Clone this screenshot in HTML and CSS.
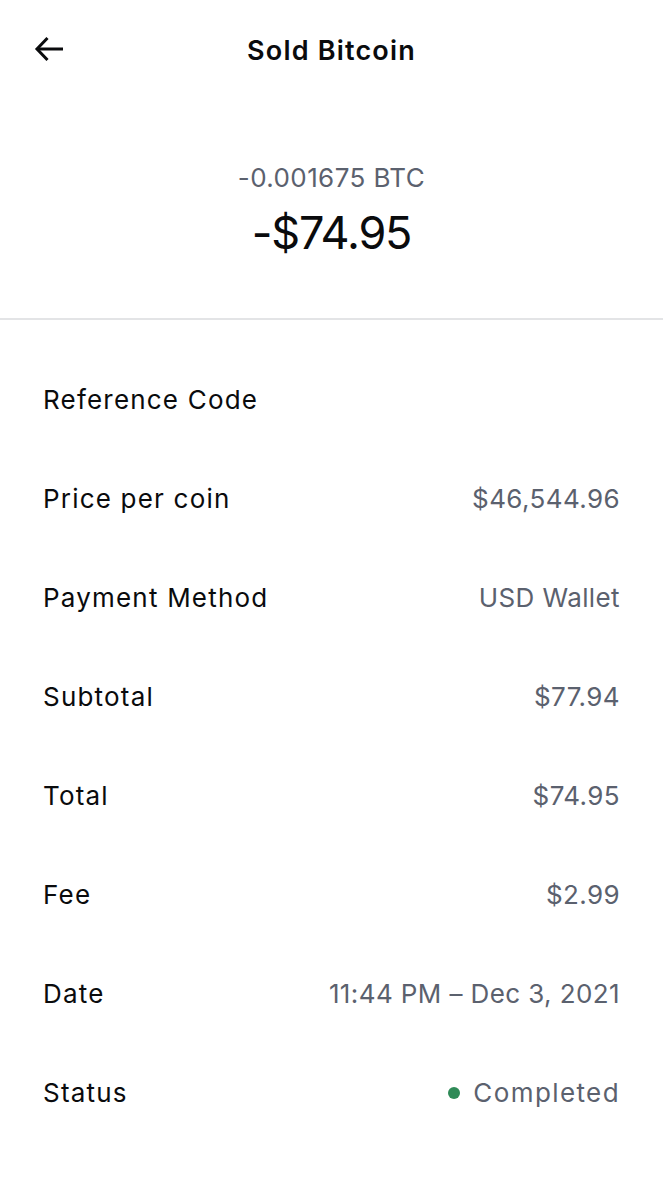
FILE: index.html
```html
<!DOCTYPE html>
<html lang="en">
<head>
    <meta charset="UTF-8">
    <meta name="viewport" content="width=device-width, initial-scale=1.0">
    <title>Sold Bitcoin</title>
    <link rel="stylesheet" href="styles.css">
</head>
<body>
    <header class="top-bar">
        <button class="back-btn" aria-label="Back">
            <svg width="30" height="26" viewBox="0 0 30 26" fill="none" stroke="#0a0b0d" stroke-width="3">
                <path d="M29 13H3"/>
                <path d="M13.5 2L3 13l10.5 11"/>
            </svg>
        </button>
        <h1 class="title">Sold Bitcoin</h1>
    </header>

    <section class="summary">
        <div class="crypto-amount">-0.001675 BTC</div>
        <div class="fiat-amount">-$74.95</div>
    </section>

    <ul class="details">
        <li class="row"><span class="label">Reference Code</span><span class="value"></span></li>
        <li class="row"><span class="label">Price per coin</span><span class="value">$46,544.96</span></li>
        <li class="row"><span class="label">Payment Method</span><span class="value">USD Wallet</span></li>
        <li class="row"><span class="label">Subtotal</span><span class="value">$77.94</span></li>
        <li class="row"><span class="label">Total</span><span class="value">$74.95</span></li>
        <li class="row"><span class="label">Fee</span><span class="value">$2.99</span></li>
        <li class="row"><span class="label">Date</span><span class="value">11:44 PM – Dec 3, 2021</span></li>
        <li class="row"><span class="label">Status</span><span class="value status"><span class="dot"></span>Completed</span></li>
    </ul>
</body>
</html>
```

FILE: styles.css
```css
body {
    margin: 0;
    font-family: Inter, "Noto Sans", Arial, sans-serif;
    background-color: #ffffff;
    color: #0a0b0d;
}
.top-bar {
    position: relative;
    height: 100px;
    display: flex;
    align-items: center;
    justify-content: center;
}
.back-btn {
    position: absolute;
    left: 34px;
    top: 36px;
    background: none;
    border: none;
    padding: 0;
    cursor: pointer;
    display: flex;
}
.title {
    margin: 0;
    font-size: 27px;
    font-weight: 600;
    letter-spacing: 1.2px;
}
.summary {
    padding-top: 60px;
    box-sizing: border-box;
    display: flex;
    flex-direction: column;
    align-items: center;
    border-bottom: 2px solid #e3e4e6;
    height: 220px;
}
.crypto-amount {
    font-size: 26px;
    color: #5b616e;
    line-height: 36px;
    letter-spacing: 0.4px;
}
.fiat-amount {
    font-size: 45px;
    font-weight: 400;
    letter-spacing: -1.2px;
    line-height: 58px;
    margin-top: 8px;
}
.details {
    list-style: none;
    margin: 0;
    padding: 30px 43px 0 43px;
}
.row {
    height: 99px;
    display: flex;
    align-items: center;
    justify-content: space-between;
    font-size: 26px;
    letter-spacing: 1.2px;
}
.value {
    color: #5b616e;
    letter-spacing: 0.4px;
}
.status {
    display: flex;
    align-items: center;
    gap: 13px;
    letter-spacing: 1.4px;
}
.dot {
    width: 12px;
    height: 12px;
    border-radius: 50%;
    background-color: #2f8a57;
}
```
